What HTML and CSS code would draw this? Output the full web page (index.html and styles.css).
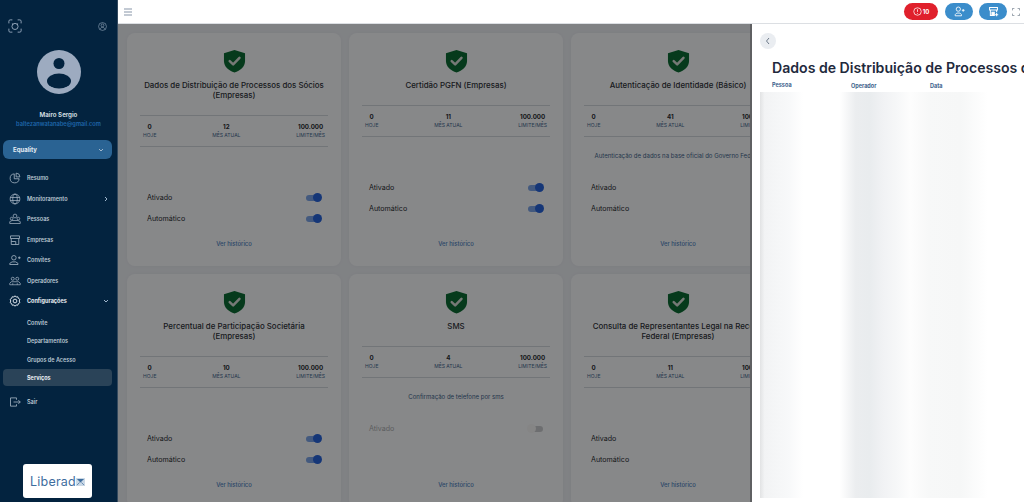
FILE: index.html
```html
<!DOCTYPE html>
<html lang="pt-BR">
<head>
<meta charset="utf-8">
<title>Serviços</title>
<link rel="stylesheet" href="styles.css">
</head>
<body>
<svg class="defs" aria-hidden="true">
  <symbol id="shield" viewBox="0 0 24 24">
    <path d="M12 .5 L23 4 V12 C23 18 18 22 12 24 C6 22 1 18 1 12 V4 Z" fill="#0b6b33"/>
    <path d="M7 12.2 L10.6 15.6 L17.2 8.8" fill="none" stroke="#d8dcd8" stroke-width="2.6" stroke-linecap="round" stroke-linejoin="round"/>
  </symbol>
</svg>
<div class="app">
  <aside class="sidebar">
    <div class="side-top">
      <svg class="ic-scan" viewBox="0 0 16 16" fill="none" stroke="#9fb0c4" stroke-width="1"><path d="M1 5V2.500A1.500 1.500 0 0 1 2.500 1H5M11 1h2.500A1.500 1.500 0 0 1 15 2.500V5M15 11v2.500a1.500 1.500 0 0 1-1.500 1.500H11M5 15H2.500A1.500 1.500 0 0 1 1 13.500V11"/><circle cx="8" cy="8.500" r="3.500"/><path d="M4.500 5.500 6 6M11.500 5.500 10 6"/></svg>
      <svg class="ic-user" viewBox="0 0 16 16" fill="none" stroke="#9fb0c4" stroke-width="1"><circle cx="8" cy="8" r="7"/><circle cx="8" cy="6" r="2.500"/><path d="M3.800 13c.6-2.400 2.200-3.500 4.200-3.500s3.600 1.100 4.200 3.500"/></svg>
    </div>
    <svg class="avatar" viewBox="0 0 44 44"><circle cx="22" cy="22" r="22" fill="#9dabc0"/><circle cx="22" cy="13.500" r="5.500" fill="#03233f"/><ellipse cx="22" cy="31" rx="12" ry="7.500" fill="#03233f"/></svg>
    <p class="user-name">Mairo Sergio</p>
    <p class="user-mail">baltezanwatanabe@gmail.com</p>
    <div class="company"><span>Equality</span><svg class="chev" viewBox="0 0 8 8" fill="none" stroke="#9fb6cc" stroke-width="1"><path d="M2 3l2 2 2-2"/></svg></div>
    <nav class="menu">
      <a class="item"><svg viewBox="0 0 16 16" fill="none" stroke="#a3b2c1" stroke-width="1.100"><path d="M7 2.500a6 6 0 1 0 6.500 6.500H7z"/><path d="M9.500 1.500a5 5 0 0 1 5 5h-5z"/></svg>Resumo</a>
      <a class="item"><svg viewBox="0 0 16 16" fill="none" stroke="#a3b2c1" stroke-width="1"><circle cx="8" cy="8" r="6.500"/><ellipse cx="8" cy="8" rx="3" ry="6.500"/><path d="M1.500 6h13M1.500 10h13"/></svg>Monitoramento<svg class="chev end" viewBox="0 0 8 8" fill="none" stroke="#9fb6cc" stroke-width="1"><path d="M3 2l2 2-2 2"/></svg></a>
      <a class="item"><svg viewBox="0 0 16 16" fill="none" stroke="#a3b2c1" stroke-width="1"><circle cx="8" cy="4" r="2.500"/><circle cx="3.500" cy="7.500" r="1.800"/><circle cx="12.500" cy="7.500" r="1.800"/><path d="M1 14v-2.500L4 10h8l3 1.500V14z"/></svg>Pessoas</a>
      <a class="item"><svg viewBox="0 0 16 16" fill="none" stroke="#a3b2c1" stroke-width="1.100"><path d="M2 2.500h12v3.500H2zM3 6v8h10V6M3 10h6v4"/></svg>Empresas</a>
      <a class="item"><svg viewBox="0 0 16 16" fill="none" stroke="#a3b2c1" stroke-width="1.100"><circle cx="6.500" cy="5" r="3"/><path d="M1 14v-1.500L4 10.500h5l3 2V14zM12 5h3.500M13.700 3.300v3.500"/></svg>Convites</a>
      <a class="item"><svg viewBox="0 0 16 16" fill="none" stroke="#a3b2c1" stroke-width="1"><circle cx="5" cy="5" r="2"/><circle cx="11" cy="5" r="2"/><path d="M1 13v-2l2-2h10l2 2v2zM5 13v-2M11 13v-2"/></svg>Operadores</a>
      <a class="item strong"><svg viewBox="0 0 16 16" fill="none" stroke="#dbe3ea" stroke-width="1.300"><path d="M8 1l1.500 1.700 2.300-.3.700 2.200 2 1.200-.9 2.200.9 2.200-2 1.200-.7 2.200-2.300-.3L8 15l-1.500-1.700-2.300.3-.7-2.200-2-1.200.9-2.200-.9-2.200 2-1.200.7-2.200 2.300.3z"/><circle cx="8" cy="8" r="2.500"/></svg>Configurações<svg class="chev end" viewBox="0 0 8 8" fill="none" stroke="#9fb6cc" stroke-width="1"><path d="M2 3l2 2 2-2"/></svg></a>
      <a class="sub first">Convite</a>
      <a class="sub">Departamentos</a>
      <a class="sub">Grupos de Acesso</a>
      <a class="sub active">Serviços</a>
      <a class="item exit"><svg viewBox="0 0 16 16" fill="none" stroke="#a3b2c1" stroke-width="1.100"><path d="M10 5V2.500H2v11h8V11M6 8h9M12.500 5.500 15 8l-2.500 2.500"/></svg>Sair</a>
    </nav>
    <div class="logo"><span>Liberad</span><svg viewBox="0 0 10 9"><rect width="10" height="9" fill="#cbd9e6"/><path d="M1 1h8L5 5z" fill="#3e6d9e"/><path d="M1 8l3-3M9 8L6 5" stroke="#3e6d9e" stroke-width=".8"/></svg></div>
  </aside>

  <div class="main">
    <header class="topbar">
      <svg class="burger" viewBox="0 0 8 8" stroke="#8795a8" stroke-width="1"><path d="M0 1h8M0 4h8M0 7h8"/></svg>
      <div class="actions">
        <button class="pill red"><svg viewBox="0 0 12 12" fill="none" stroke="#fff" stroke-width="1"><circle cx="6" cy="6" r="5"/><path d="M6 3v3.500M6 8v1"/></svg>10</button>
        <button class="pill blue"><svg viewBox="0 0 14 14" fill="none" stroke="#fff" stroke-width="1.100"><circle cx="5.500" cy="4" r="2.700"/><path d="M1.500 12.500v-1.500l2-2h4l2 2v1.500zM10 5.500h3.500M11.700 3.800v3.500"/></svg></button>
        <button class="pill blue"><svg viewBox="0 0 14 14" fill="none" stroke="#fff" stroke-width="1.300"><path d="M2 2h10v3H2zM3 5v7h5M11 5v3M9 11h4M11 9v4"/><path d="M5 8h3v4H5z" fill="#fff"/></svg></button>
        <svg class="expand" viewBox="0 0 10 10" fill="none" stroke="#6d7a88" stroke-width=".9"><path d="M.5 3V.5H3M7 .5h2.500V3M9.500 7v2.500H7M3 9.500H.5V7"/></svg>
      </div>
    </header>

    <section class="content">
      <div class="grid">
        <article class="card">
          <svg class="shield"><use href="#shield"/></svg>
          <h2>Dados de Distribuição de Processos dos Sócios (Empresas)</h2>
          <div class="stats"><div><b>0</b><small>HOJE</small></div><div><b>12</b><small>MÊS ATUAL</small></div><div><b>100.000</b><small>LIMITE/MÊS</small></div></div>
          <p class="desc"></p>
          <div class="row">Ativado<i class="toggle on"></i></div>
          <div class="row">Automático<i class="toggle on"></i></div>
          <a class="link">Ver histórico</a>
        </article>
        <article class="card">
          <svg class="shield"><use href="#shield"/></svg>
          <h2>Certidão PGFN (Empresas)</h2>
          <div class="stats"><div><b>0</b><small>HOJE</small></div><div><b>11</b><small>MÊS ATUAL</small></div><div><b>100.000</b><small>LIMITE/MÊS</small></div></div>
          <p class="desc"></p>
          <div class="row">Ativado<i class="toggle on"></i></div>
          <div class="row">Automático<i class="toggle on"></i></div>
          <a class="link">Ver histórico</a>
        </article>
        <article class="card">
          <svg class="shield"><use href="#shield"/></svg>
          <h2>Autenticação de Identidade (Básico)</h2>
          <div class="stats"><div><b>0</b><small>HOJE</small></div><div><b>41</b><small>MÊS ATUAL</small></div><div><b>100.000</b><small>LIMITE/MÊS</small></div></div>
          <p class="desc">Autenticação de dados na base oficial do Governo Federal</p>
          <div class="row">Ativado<i class="toggle on"></i></div>
          <div class="row">Automático<i class="toggle on"></i></div>
          <a class="link">Ver histórico</a>
        </article>
        <article class="card">
          <svg class="shield"><use href="#shield"/></svg>
          <h2>Percentual de Participação Societária (Empresas)</h2>
          <div class="stats"><div><b>0</b><small>HOJE</small></div><div><b>10</b><small>MÊS ATUAL</small></div><div><b>100.000</b><small>LIMITE/MÊS</small></div></div>
          <p class="desc"></p>
          <div class="row">Ativado<i class="toggle on"></i></div>
          <div class="row">Automático<i class="toggle on"></i></div>
          <a class="link">Ver histórico</a>
        </article>
        <article class="card">
          <svg class="shield"><use href="#shield"/></svg>
          <h2>SMS</h2>
          <div class="stats"><div><b>0</b><small>HOJE</small></div><div><b>4</b><small>MÊS ATUAL</small></div><div><b>100.000</b><small>LIMITE/MÊS</small></div></div>
          <p class="desc">Confirmação de telefone por sms</p>
          <div class="row off">Ativado<i class="toggle"></i></div>
          <a class="link">Ver histórico</a>
        </article>
        <article class="card">
          <svg class="shield"><use href="#shield"/></svg>
          <h2>Consulta de Representantes Legal na Receita Federal (Empresas)</h2>
          <div class="stats"><div><b>0</b><small>HOJE</small></div><div><b>11</b><small>MÊS ATUAL</small></div><div><b>100.000</b><small>LIMITE/MÊS</small></div></div>
          <p class="desc"></p>
          <div class="row">Ativado<i class="toggle on"></i></div>
          <div class="row">Automático<i class="toggle on"></i></div>
          <a class="link">Ver histórico</a>
        </article>
      </div>
      <div class="overlay"></div>
      <aside class="drawer">
        <button class="back"><svg viewBox="0 0 8 8" fill="none" stroke="#5d6b7c" stroke-width=".9"><path d="M5 1 2.500 4 5 7"/></svg></button>
        <h1>Dados de Distribuição de Processos dos Sócios (Empresas)</h1>
        <div class="cols"><span class="c1">Pessoa</span><span class="c2">Operador</span><span class="c3">Data</span></div>
        <div class="smear"></div>
      </aside>
    </section>
  </div>
</div>
</body>
</html>
```
FILE: styles.css
```css
* { box-sizing: border-box; }
html, body { margin: 0; height: 100%; overflow: hidden; }
body { font-family: "Inter", "Liberation Sans", sans-serif; background: #fff; }
.defs { display: none; }
p, h1, h2 { margin: 0; }
.app { display: flex; height: 502px; }

/* Sidebar */
.sidebar { width: 118px; flex: none; background: #03233f; border-right: 1px solid #33495e; display: flex; flex-direction: column; color: #dfe6ec; }
.side-top { display: flex; justify-content: space-between; align-items: center; padding: 15px 10px 0 8px; height: 37px; }
.ic-scan { width: 14px; height: 14px; }
.ic-user { width: 9px; height: 9px; }
.avatar { width: 44px; height: 44px; margin: 13px auto 0; display: block; flex: none; }
.user-name { margin-top: 16px; text-align: center; font-size: 6.2px; line-height: 10px; font-weight: 600; color: #dfe5ea; }
.user-mail { text-align: center; font-size: 5.7px; line-height: 8px; font-weight: 600; color: #1f66aa; }
.company { margin: 12px 5px 0 3px; height: 19px; border-radius: 6px; background: #2a6393; display: flex; align-items: center; justify-content: space-between; padding: 0 7px 0 10px; font-size: 6px; font-weight: 700; color: #e3ebf2; }
.chev { width: 8px; height: 8px; }
.menu { margin-top: 9px; display: flex; flex-direction: column; }
.item { height: 20.5px; display: flex; align-items: center; gap: 6px; padding-left: 9px; padding-right: 7px; font-size: 5.5px; font-weight: 600; color: #bcc8d3; }
.item > svg:first-child { width: 12px; height: 12px; flex: none; }
.item .end { margin-left: auto; }
.strong { color: #e9eef2; font-weight: 700; }
.sub { margin: 0 5px 0 3px; height: 18.5px; display: flex; align-items: center; padding-left: 24px; font-size: 5.5px; font-weight: 600; color: #bcc8d3; border-radius: 4px; }
.sub.first { margin-top: 2px; }
.sub.active { background: #2a4358; color: #e9eef2; font-weight: 700; height: 17px; }
.exit { margin-top: 6px; }
.logo { margin: auto 25px 4px 23px; height: 34px; background: #fff; border-radius: 3px; display: flex; align-items: center; justify-content: center; color: #3e6d9e; font-size: 12.5px; letter-spacing: .2px; font-weight: 400; }
.logo svg { width: 9px; height: 8px; margin-top: 2px; }

/* Main */
.main { flex: 1; min-width: 0; display: flex; flex-direction: column; }
.topbar { height: 24px; flex: none; background: #fff; border-bottom: 1px solid #dcdfe3; display: flex; align-items: center; justify-content: space-between; padding: 0 4px 0 6px; }
.burger { width: 8px; height: 8px; }
.actions { display: flex; align-items: center; gap: 6px; }
.pill { border: 0; padding: 0; height: 17px; width: 28px; border-radius: 9px; display: flex; align-items: center; justify-content: center; gap: 1px; color: #fff; font: 700 6px "Inter", sans-serif; }
.pill svg { width: 11px; height: 11px; }
.red svg { width: 9px; height: 9px; }
.red { background: #e0202c; width: 34px; margin-right: 1px; }
.blue { background: #3b8dcb; }
.expand { width: 8px; height: 8px; margin-left: -1px; }

.content { position: relative; flex: 1; min-height: 0; overflow: hidden; background: #eaedf1; padding: 9px 0 0 9px; }
.grid { display: grid; grid-template-columns: repeat(3, 214px); grid-auto-rows: 233px; gap: 8px; }
.card { background: #f6f8fa; border-radius: 8px; padding: 16px 13px 0; display: flex; flex-direction: column; align-items: stretch; position: relative; box-shadow: 0 0 4px rgba(0,0,0,.04); }
.shield { width: 23px; height: 24px; align-self: center; flex: none; }
.card h2 { margin-top: 7px; padding: 0 3px; font-size: 7.9px; line-height: 10px; font-weight: 500; text-align: center; color: #2e3238; }
.stats { margin-top: 15px; height: 32px; border-top: 1px solid #cfd5da; border-bottom: 1px solid #cfd5da; display: flex; justify-content: space-between; align-items: center; padding: 0 3px; }
.stats div { display: flex; flex-direction: column; align-items: center; }
.stats b { font-size: 6.2px; line-height: 8px; font-weight: 700; color: #2a2d32; }
.stats small { font-size: 5px; line-height: 8px; color: #44658c; }
.desc { height: 40px; padding-bottom: 3px; display: flex; align-items: center; justify-content: center; font-size: 6.05px; color: #44658c; white-space: nowrap; }
.row { height: 21px; display: flex; align-items: center; justify-content: space-between; padding: 0 7px; font-size: 7.1px; color: #2a2d32; }
.row.off { color: #a9abad; }
.toggle { width: 15px; height: 6px; border-radius: 3px; position: relative; background: #c7c9cc; }
.toggle::after { content: ""; position: absolute; left: -1px; top: -1.5px; width: 9px; height: 9px; border-radius: 50%; background: #f2f2f2; }
.toggle.on { background: #7ba3e6; }
.toggle.on::after { left: auto; right: -1px; background: #2763d9; }
.link { position: absolute; left: 0; right: 0; top: 207px; text-align: center; font-size: 5.9px; line-height: 8px; font-weight: 500; color: #4f82bd; }

.overlay { position: absolute; inset: 0; background: rgba(0,0,0,.45); backdrop-filter: blur(.6px); }
.drawer { position: absolute; top: 0; right: 0; bottom: 0; width: 274px; background: #fff; border-left: 2px solid #5f6062; overflow: hidden; }
.back { position: absolute; left: 8px; top: 9px; width: 16px; height: 16px; padding: 4px; border: 0; border-radius: 50%; background: #eaedf1; }
.back svg { display: block; width: 8px; height: 8px; }
.drawer h1 { position: absolute; left: 20px; top: 34px; white-space: nowrap; font-size: 14.1px; line-height: 20px; font-weight: 600; color: #1f2a3d; }
.cols { position: absolute; left: 0; top: 58px; width: 272px; height: 10px; font-size: 5.5px; font-weight: 700; color: #3c5f8c; }
.cols span { position: absolute; top: 0; }
.cols .c1 { left: 20px; }
.cols .c2 { left: 99px; top: 1px; }
.cols .c3 { left: 178px; top: 1px; }
.smear { position: absolute; left: 8px; top: 68px; width: 228px; height: 406px; background: linear-gradient(90deg, #e2e3e4 0, #f2f3f4 2%, #f8f9fa 13%, #fff 19%, #fff 35%, #ebedef 42%, #e9ecee 48%, #f1f2f4 54%, #f6f7f8 60%, #fdfdfd 66%, #f7f8f8 74%, #f6f7f7 88%, #fff 100%); }
```
